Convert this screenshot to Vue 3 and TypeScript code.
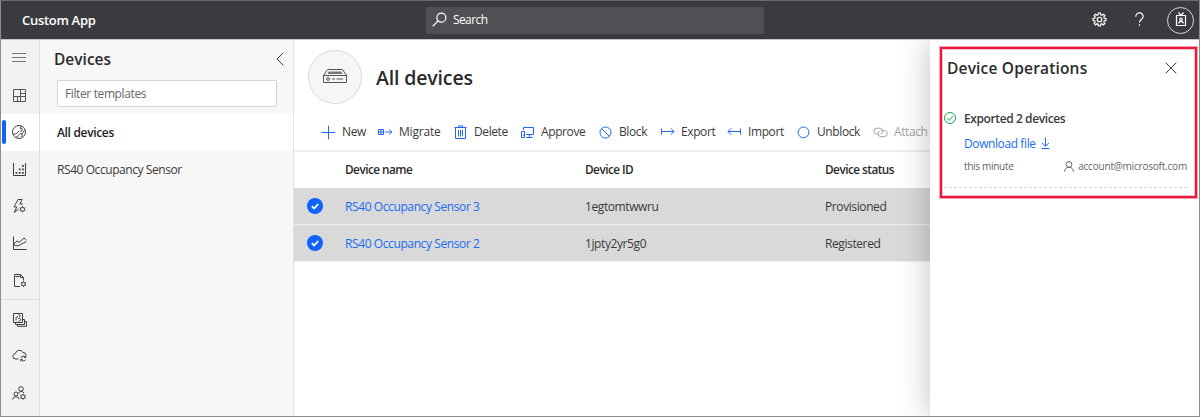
<script setup lang="ts">
interface NavItem { id: string; paths: string[]; dots?: string; active?: boolean; divided?: boolean }
interface Command { label: string; id: string; paths: string[]; disabled?: boolean }
interface Device { name: string; deviceId: string; status: string }

const nav: NavItem[] = [
  { id: 'menu', paths: ['M1 3.5H15M1 7.5H15M1 11.5H15'] },
  { id: 'dashboard', paths: ['M2.5 2.5H14.5V14.5H2.5ZM9.5 2.5V14.5M2.5 9.5H14.5M9.5 6.5H14.5M6.5 9.5V14.5'] },
  { id: 'devices', active: true, paths: ['M8 1.5a6.5 6.5 0 1 0 0 13a6.5 6.5 0 1 0 0-13Z', 'M9 4.3a1.5 1.5 0 1 1 .3 2.8M8.4 6.8C6.6 7.2 6.8 9.6 4.6 9.8L2.4 10.4M10.6 2.2L9 4.3M8.2 10.6a1.6 1.6 0 1 1 1.6 2.2M10.8 10.2C12.4 9.6 11.4 7.4 13.8 6.2M4.8 13.4C6.4 13.2 6.8 11.6 8.2 11.4'] },
  { id: 'jobs', paths: ['M2.5 2V14.5H14.5V2'], dots: 'M4.5 11h1.8v1.8H4.5zM7.8 11h1.8v1.8H7.8zM11 11h1.8v1.8h-1.8zM7.8 7.5h1.8v1.8H7.8zM11 7.5h1.8v1.8h-1.8zM11 4h1.8v1.8h-1.8z' },
  { id: 'rules', paths: ['M7 1.5H11.2L8.8 6H12M7 1.5L3 9H5.8L3.2 14.5L7.6 11', 'M11.5 9.3a2 2 0 1 0 0 4a2 2 0 1 0 0-4ZM11.5 8.2V9.3M11.5 13.3V14.4M8.7 9.7L9.8 10.3M13.3 12.3L14.3 12.9M8.7 12.9L9.8 12.3M13.3 10.3L14.3 9.7'] },
  { id: 'analytics', paths: ['M2.5 1.5V14.5H15.5', 'M3 9L6 5.8L8 7.5L13 3L15.3 5M3 10L7 11L15.3 6.5'] },
  { id: 'templates', paths: ['M9 14.5H3.5V2.5H9.5L12.5 5.5V8.5M9.5 2.5V5.5H12.5M4.5 4.5H8.5', 'M12.5 10.2a1.8 1.8 0 1 0 0 3.6a1.8 1.8 0 1 0 0-3.6ZM12.5 9.2V10.2M12.5 13.8V14.8M10.1 10.6L11 11.1M14 12.9L14.9 13.4M10.1 13.4L11 12.9M14 11.1L14.9 10.6'] },
  { id: 'catalog', divided: true, paths: ['M2.5 2.5H11.5V11.5H2.5Z', 'M11.5 8.5H13.5V13.5H4.5V11.5M13.5 10.5H15.5V15.3H6.5V13.5', 'M7.5 4a1 1 0 1 1 .6 1.8M7.1 5.4L4.5 7M7.3 7.5a1.5 1.5 0 1 1 .2 2.6M5.1 9.5V7.4'] },
  { id: 'export', paths: ['M7.5 12H4.7a2.7 2.7 0 0 1-.3-5.4A4 4 0 0 1 11.8 5.3A3.3 3.3 0 0 1 15.1 8.5', 'M14.7 10.3A2.7 2.7 0 0 0 9.9 10.9M14.8 8.5V10.5H12.8M10 12.5A2.7 2.7 0 0 0 14.8 12.5M9.8 14.3V12.4H11.7'] },
  { id: 'admin', paths: ['M10 1.6a2.3 2.3 0 1 0 0 4.6a2.3 2.3 0 1 0 0-4.6ZM7.6 8.2A3 3 0 0 1 13 8', 'M5 7a2 2 0 1 0 0 4a2 2 0 1 0 0-4ZM1.5 14.5A3.5 3.5 0 0 1 8.3 14.2', 'M12 9.7a2 2 0 1 0 0 4a2 2 0 1 0 0-4ZM12 8.7V9.7M12 13.7V14.7M9.4 10.2L10.3 10.7M13.7 12.7L14.6 13.2M9.4 13.2L10.3 12.7M13.7 10.7L14.6 10.2'] },
]

const commands: Command[] = [
  { label: 'New', id: 'new', paths: ['M7.5 .7V14.3M.7 7.5H14.3'] },
  { label: 'Migrate', id: 'migrate', paths: ['M.5 4.5H5.5V9.5H.5ZM3 4.5V9.5M.5 7H5.5M7 7H14M11.2 4.4L13.8 7L11.2 9.6'] },
  { label: 'Delete', id: 'delete', paths: ['M1.5 2.5H13.5M5.5 2.5V.9H9.5V2.5M2.5 2.5V13.5H12.5V2.5M5.5 5V11.5M7.5 5V11.5M9.5 5V11.5'] },
  { label: 'Approve', id: 'approve', paths: ['M3.5 5V2.5H13.5V9.5H6.2M9.5 9.5V12M6.2 12.5H12.5M1.5 6.5H4.5V12.5H1.5ZM2.8 10.2H4.5'] },
  { label: 'Block', id: 'block', paths: ['M7.5 2a5.5 5.5 0 1 0 0 11a5.5 5.5 0 1 0 0-11ZM3.7 3.7L11.3 11.3'] },
  { label: 'Export', id: 'export', paths: ['M1.5 3.5V9.5M1 6.5H14M10.8 3.3L14 6.5L10.8 9.7'] },
  { label: 'Import', id: 'import', paths: ['M13.5 3.5V9.5M14 6.5H1M4.2 3.3L1 6.5L4.2 9.7'] },
  { label: 'Unblock', id: 'unblock', paths: ['M7.5 2a5.4 5.4 0 1 0 0 10.8a5.4 5.4 0 1 0 0-10.8Z'] },
  { label: 'Attach', id: 'attach', disabled: true, paths: ['M5 9.2H3.8A3 3 0 0 1 3.8 3.2H7A3 3 0 0 1 7.5 9.1M10 5.5H11.2A3 3 0 0 1 11.2 11.7H8A3 3 0 0 1 7.5 5.8'] },
]

const devices: Device[] = [
  { name: 'RS40 Occupancy Sensor 3', deviceId: '1egtomtwwru', status: 'Provisioned' },
  { name: 'RS40 Occupancy Sensor 2', deviceId: '1jpty2yr5g0', status: 'Registered' },
]
</script>

<template>
  <div class="app">
    <header class="topbar">
      <div class="brand">Custom App</div>
      <div class="search">
        <svg class="search-icon" viewBox="0 0 16 16"><circle cx="10" cy="6" r="4.8" /><path d="M6.5 9.5L.8 15.2" /></svg>
        <span>Search</span>
      </div>
      <div class="top-actions">
        <svg class="gear" viewBox="0 0 16 16"><path d="M6.9 1.2H9.1L9.5 3L10.7 3.5L12.2 2.4L13.7 3.9L12.6 5.4L13.1 6.6L14.8 6.9V9.1L13.1 9.5L12.6 10.7L13.7 12.2L12.2 13.7L10.7 12.6L9.5 13.1L9.1 14.8H6.9L6.5 13.1L5.3 12.6L3.8 13.7L2.3 12.2L3.4 10.7L2.9 9.5L1.2 9.1V6.9L2.9 6.6L3.4 5.4L2.3 3.9L3.8 2.4L5.3 3.5L6.5 3Z" /><circle cx="8" cy="8" r="2.4" /></svg>
        <svg class="help" viewBox="0 0 12 16"><path d="M2 5V4.7A4 4 0 0 1 10 4.8C10 7.8 6 7.7 6 11.3" /><path d="M6 13.2V14.9" /></svg>
        <div class="avatar">
          <svg viewBox="0 0 12 15"><path d="M1.5 3.5H10.5V13.5H1.5ZM3.5 .5L6 3.5L8.5 .5" /><circle cx="6" cy="7.3" r="1.3" /><path d="M3.8 11.6A2.2 2.2 0 0 1 8.2 11.6" /></svg>
        </div>
      </div>
    </header>

    <div class="body">
      <nav class="rail">
        <div v-for="item in nav" :key="item.id" class="rail-item" :class="['nav-' + item.id, { active: item.active, divided: item.divided }]">
          <svg viewBox="0 0 16 16"><path v-for="p in item.paths" :key="p" :d="p" /><path v-if="item.dots" class="dots" :d="item.dots" /></svg>
        </div>
      </nav>

      <aside class="templates">
        <div class="templates-head">
          <h2>Devices</h2>
          <svg viewBox="0 0 8 14"><path d="M7.3 .7L1 7L7.3 13.3" /></svg>
        </div>
        <div class="filter">Filter templates</div>
        <div class="template selected">All devices</div>
        <div class="template">RS40 Occupancy Sensor</div>
      </aside>

      <main class="content">
        <div class="title">
          <div class="device-badge">
            <svg viewBox="0 0 24 15"><path d="M.5 6.5L4.5 .5H19.5L23.5 6.5V13.5H.5ZM.5 6.5H23.5M9 10H12M13.5 10H20" /><path class="vent" d="M5.8 2.6H18.2L19.6 5H4.4Z" /><circle cx="5" cy="10" r="1.4" /></svg>
          </div>
          <h1>All devices</h1>
        </div>
        <div class="commands">
          <div v-for="c in commands" :key="c.id" class="command" :class="['cmd-' + c.id, { disabled: c.disabled }]">
            <svg viewBox="0 0 15 15"><path v-for="p in c.paths" :key="p" :d="p" /></svg>
            <span>{{ c.label }}</span>
          </div>
        </div>
        <div class="grid-row grid-head">
          <span></span><span>Device name</span><span>Device ID</span><span>Device status</span>
        </div>
        <div v-for="d in devices" :key="d.deviceId" class="grid-row device">
          <svg class="check" viewBox="0 0 16 16"><circle cx="8" cy="8" r="8" /><path d="M4.8 8.2L7.1 10.4L11.3 6" /></svg>
          <span class="link">{{ d.name }}</span><span>{{ d.deviceId }}</span><span>{{ d.status }}</span>
        </div>
      </main>
    </div>

    <section class="ops">
      <div class="ops-frame">
        <div class="ops-head">
          <h2>Device Operations</h2>
          <svg viewBox="0 0 12 12"><path d="M.7 .7L11.3 11.3M11.3 .7L.7 11.3" /></svg>
        </div>
        <div class="operation">
          <svg class="ok" viewBox="0 0 12 12"><circle cx="6" cy="6" r="5.5" /><path d="M3 6.3L5.1 8.3L9 4.2" /></svg>
          <div class="operation-body">
            <div class="operation-title">Exported 2 devices</div>
            <div class="download">
              <span>Download file</span>
              <svg viewBox="0 0 9 13"><path d="M4.5 .5V9M1 5.8L4.5 9.2L8 5.8M.6 11.5H8.4" /></svg>
            </div>
            <div class="meta">
              <span class="when">this minute</span>
              <svg viewBox="0 0 10 11"><circle cx="5" cy="3.5" r="2.9" /><path d="M.6 10.6A4.4 4.4 0 0 1 9.4 10.6" /></svg>
              <span class="account">account@microsoft.com</span>
            </div>
          </div>
        </div>
      </div>
    </section>
  </div>
</template>

<style>
body { margin: 0; overflow: hidden; }
</style>

<style scoped>
* { box-sizing: border-box; }
.app {
  position: relative; width: 1200px; height: 417px; overflow: hidden;
  display: flex; flex-direction: column;
  border: 1px solid #8d8d8d; border-top-color: #6a6a6e; background: #fff;
  font: 12px/16px "Open Sans", "Noto Sans", sans-serif; color: #3b3a39;
  white-space: nowrap;
}
svg { display: block; flex: none; fill: none; stroke: currentColor; stroke-width: 1; }
h1, h2 { margin: 0; font-weight: 600; color: #2b2b2b; }

.topbar { height: 38px; flex: none; display: flex; align-items: center; background: #3b3a3f; color: #fff; }
.brand { width: 404px; padding-left: 21px; flex: none; font-size: 13px; font-weight: 600; letter-spacing: -.3px; }
.search { margin-left: 21px; width: 338px; height: 27px; display: flex; align-items: center; background: #504f54; border-radius: 2px; padding-left: 6px; gap: 5px; letter-spacing: -.6px; }
.search-icon { width: 15px; height: 15px; stroke-width: 1.3; margin: -1px 1px 0 0; }
.top-actions { margin-left: auto; display: flex; align-items: center; padding-right: 5px; }
.gear { width: 15px; height: 15px; margin: -2px 27px 0 0; stroke-width: 1.3; }
.help { width: 11px; height: 15px; margin: -1px 22px 0 0; stroke-width: 1.3; }
.avatar { width: 27px; height: 27px; border: 1px solid #d8d8d8; border-radius: 50%; display: grid; place-items: center; }
.avatar svg { width: 12px; height: 15px; stroke-width: 1.2; margin-top: -2px; }

.body { flex: 1; display: flex; min-height: 0; border-top: 1px solid #c8c8c8; }
.rail { width: 39px; flex: none; background: #f3f2f1; border-right: 1px solid #dcdcdc; }
.rail-item { height: 37px; display: flex; align-items: center; padding: 0 0 1px 10px; color: #3f3e3d; }
.rail-item svg { width: 16px; height: 16px; }
.dots { fill: currentColor; stroke: none; }
.nav-menu { color: #777; }
.nav-dashboard { color: #555; }
.nav-export, .nav-admin { height: 37.5px; }
.rail-item.divided { border-top: 1px solid #dcdcdc; height: 38px; padding-bottom: 0; }
.rail-item.active { background: #fff; padding-left: 1px; }
.rail-item.active::before { content: ""; width: 4px; height: 24px; border-radius: 2px; background: #0f62fe; margin-right: 5px; }

.templates { width: 254px; flex: none; background: #f7f7f7; border-right: 1px solid #e3e3e3; }
.templates-head { height: 38px; padding: 0 9px 0 14px; display: flex; align-items: center; justify-content: space-between; }
.templates-head h2 { font-size: 15.5px; line-height: 20px; letter-spacing: 0; }
.templates-head svg { width: 8px; height: 14px; }
.filter { height: 27px; width: 220px; margin: 2px 0 7px 17px; padding-left: 7px; border: 1px solid #d6d6d6; border-radius: 1px; background: #fff; line-height: 26px; color: #666; letter-spacing: -.38px; font-size: 12px; }
.template { height: 37px; padding-left: 17px; line-height: 37px; letter-spacing: -.43px; }
.template.selected { background: #fff; font-weight: 600; color: #222; letter-spacing: -.33px; }

.content { flex: 1; min-width: 0; }
.title { height: 74px; display: flex; align-items: center; padding: 0 0 1px 14px; }
.device-badge { width: 54px; height: 54px; border: 1px solid #dadada; border-radius: 50%; background: #f6f6f6; display: grid; place-items: center; color: #555; }
.device-badge svg { width: 24px; height: 15px; }
.vent { fill: #777; stroke: none; }
h1 { margin: 2px 0 0 14px; font-size: 19.5px; line-height: 26px; letter-spacing: -.15px; }
.commands { height: 38px; display: flex; align-items: center; padding-left: 27px; border-bottom: 2px solid #ededed; }
.command { display: flex; align-items: center; gap: 6px; flex: none; width: 57px; letter-spacing: -.4px; }
.command svg { width: 15px; height: 15px; color: #2265f2; }
.cmd-migrate { width: 75px; letter-spacing: -.2px; }
.cmd-delete { width: 67px; }
.cmd-approve { width: 78px; }
.cmd-block { width: 62px; }
.cmd-export { width: 67px; }
.cmd-import { width: 69px; }
.cmd-unblock { width: 77px; }
.command.disabled, .command.disabled svg { color: #a4a4a4; }
.grid-row { display: grid; grid-template-columns: 51px 240px 240px 1fr; align-items: center; height: 37px; letter-spacing: -.4px; }
.grid-head { height: 36px; padding-bottom: 2px; font-weight: 600; font-size: 11.8px; letter-spacing: -.53px; color: #2b2b2b; }
.device { background: #d9d9d9; border-bottom: 1px solid #efefef; }
.device span { padding-top: 1px; }
.device .link { color: #1b6cf2; }
.check { width: 16px; height: 16px; margin-left: 13px; }
.check circle { fill: #0f62fe; stroke: none; }
.check path { stroke: #fff; stroke-width: 1.8; }

.ops { position: absolute; top: 39px; right: 0; bottom: 0; width: 269px; padding: 7px 2px 0 10px; background: #fff; box-shadow: 0 0 30px rgba(0, 0, 0, .25); clip-path: inset(0 0 0 -40px); }
.ops-frame { height: 151px; border: 2px solid #ea1b3a; box-shadow: 0 0 0 1px rgba(234, 27, 58, .4), inset 0 0 0 1px rgba(234, 27, 58, .25); padding-left: 2px; }
.ops-head { height: 38px; display: flex; align-items: center; justify-content: space-between; padding: 0 18px 0 3px; }
.ops-head h2 { font-size: 15.5px; line-height: 20px; letter-spacing: .18px; }
.ops-head svg { width: 12px; height: 12px; }
.operation { display: flex; align-items: flex-start; width: 243px; margin-top: 24px; padding-bottom: 14px; border-bottom: 1px dashed #d4d4d4; }
.ok { width: 12px; height: 12px; margin: 1px 8px 0 0; color: #16a34a; }
.operation-body { flex: 1; }
.operation-title { font-weight: 600; letter-spacing: -.4px; }
.download { display: flex; align-items: center; gap: 5px; margin-top: 9px; color: #1b6cf2; letter-spacing: -.4px; }
.download svg { width: 9px; height: 13px; margin-top: -2px; }
.meta { display: flex; align-items: center; margin-top: 7px; font-size: 10px; line-height: 14px; color: #666; letter-spacing: -.2px; }
.when { letter-spacing: -.3px; }
.meta svg { width: 10px; height: 11px; margin: 0 4px 0 auto; }
</style>
